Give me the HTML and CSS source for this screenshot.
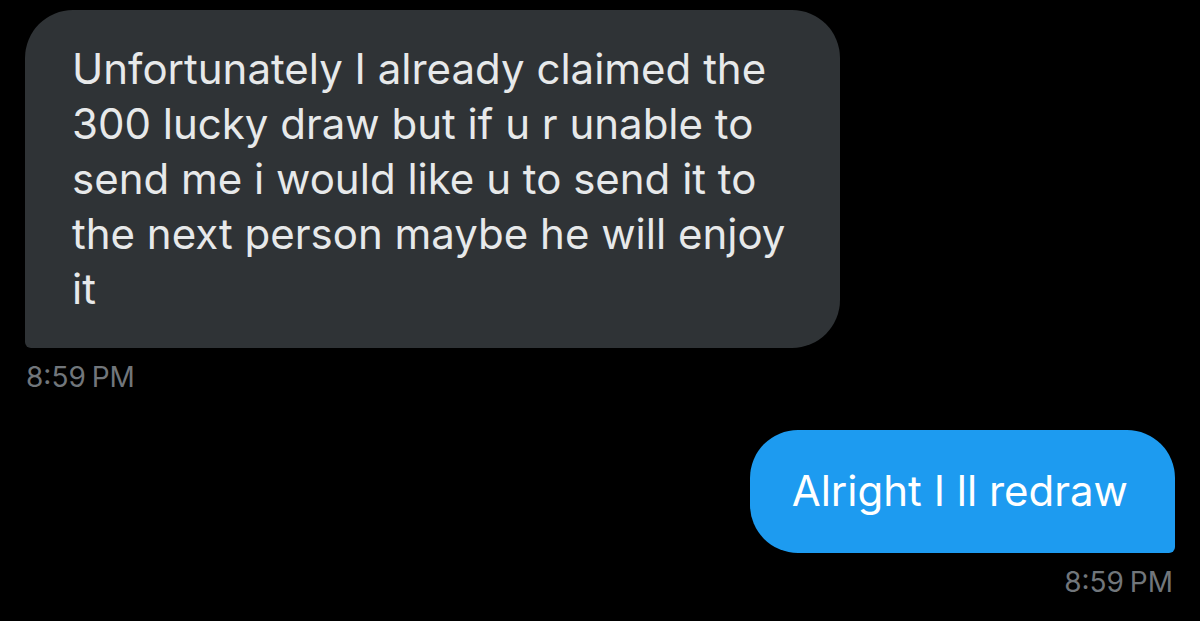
FILE: index.html
```html
<!doctype html>
<html lang="en-US">
  <head>
    <meta charset="utf-8" />
    <title>Messages</title>
    <link rel="stylesheet" href="styles.css">
  </head>
  <body>
    <div class="thread">
      <div class="msg msg-in">
        <div class="bubble">Unfortunately I already claimed the 300 lucky draw but if u r unable to send me i would like u to send it to the next person maybe he will enjoy it</div>
        <div class="time">8:59 PM</div>
      </div>
      <div class="msg msg-out">
        <div class="bubble">Alright I ll redraw</div>
        <div class="time">8:59 PM</div>
      </div>
    </div>
  </body>
</html>
```

FILE: styles.css
```css
* {
	box-sizing: border-box;
}

body {
	margin: 0;
	background: #000;
	font-family: Inter, "Noto Sans", sans-serif;
}

.thread {
	display: flex;
	flex-direction: column;
	gap: 36px;
	padding: 10px 25px;
}

.msg {
	display: flex;
	flex-direction: column;
}

.msg-in {
	align-items: flex-start;
}

.msg-out {
	align-items: flex-end;
}

.bubble {
	font-size: 42px;
	line-height: 55px;
	border-radius: 48px;
}

.msg-in .bubble {
	width: 815px;
	padding: 31px 36px 32px 47px;
	background: #2f3336;
	color: #e7e9ea;
	border-bottom-left-radius: 6px;
}

.msg-out .bubble {
	background: #1d9bf0;
	color: #fff;
	padding: 33px 47px 35px 42px;
	border-bottom-right-radius: 6px;
}

.time {
	color: #71767b;
	font-size: 28px;
	line-height: 34px;
	margin-top: 12px;
	word-spacing: -2px;
}

.msg-in .time {
	margin-left: 1px;
}

.msg-out .time {
	margin-right: 2px;
}
```
